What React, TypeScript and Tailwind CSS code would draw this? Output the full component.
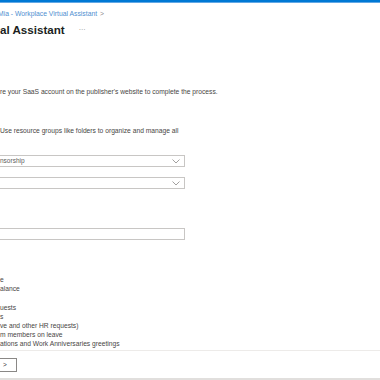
import React from 'react'

function Chevron() {
  return (
    <svg width="8" height="5" viewBox="0 0 8 5" fill="none" className="shrink-0">
      <path d="M0.5 0.5L4 4L7.5 0.5" stroke="#8a8886" strokeWidth="0.8" />
    </svg>
  )
}

function Select({ value }: { value: string }) {
  return (
    <div className="flex h-[12px] w-[185px] items-center justify-between border border-l-0 border-[#c8c6c4] pr-[4px] text-[6.5px] text-[#605e5c]">
      <span>{value}</span>
      <Chevron />
    </div>
  )
}

const items = [
  'e',
  'alance',
  '',
  'uests',
  's',
  've and other HR requests)',
  'm members on leave',
  'ations and Work Anniversaries greetings',
  'ions',
]

export default function App() {
  return (
    <div
      className="relative flex h-[380px] w-[380px] flex-col overflow-hidden bg-white text-[#323130]"
      style={{ fontFamily: '"Liberation Sans", Arial, sans-serif' }}
    >
      <div className="h-[2px] shrink-0 bg-[#0078d4]" />
      <div className="h-[1px] shrink-0 bg-[#62a8e5]" />

      <div className="min-h-0 flex-1 overflow-hidden">
        <div className="mt-[7px] flex h-[8px] items-center gap-[3px] text-[6.8px] text-[#4f8fd0]">
          <span className="-ml-[2px]">Mia - Workplace Virtual Assistant</span>
          <span className="text-[#8a8886]">&gt;</span>
        </div>

        <div className="mt-[5px] flex h-[14px] items-center">
          <span className="text-[11.6px] font-bold text-[#201f1e]">al Assistant</span>
          <span className="ml-[14px] text-[7px] text-[#8a8886]">···</span>
        </div>

        <p className="mt-[51px] text-[6.7px] leading-[8px] text-[#484644]">
          re your SaaS account on the publisher's website to complete the process.
        </p>

        <p className="mt-[31px] text-[6.7px] leading-[8px] text-[#484644]">
          Use resource groups like folders to organize and manage all
        </p>

        <div className="mt-[20px] flex flex-col gap-[10px]">
          <Select value="nsorship" />
          <Select value="" />
        </div>

        <div className="mt-[39px] h-[12px] w-[185px] border border-l-0 border-[#c8c6c4]" />

        <ul className="mt-[35px] text-[6.7px] leading-[9.2px] text-[#484644]">
          {items.map((t, i) => (
            <li key={i} className="h-[9.2px]">
              {t}
            </li>
          ))}
        </ul>
      </div>

      <div className="flex h-[28px] shrink-0 items-center border-t border-[#edebe9]">
        <div className="-ml-[2px] flex h-[14px] w-[19px] items-center border border-[#8a8886] pl-[4px] text-[6.5px]">
          &gt;
        </div>
      </div>
      <div className="h-[2px] shrink-0 bg-[#e1dfdd]" />
    </div>
  )
}
